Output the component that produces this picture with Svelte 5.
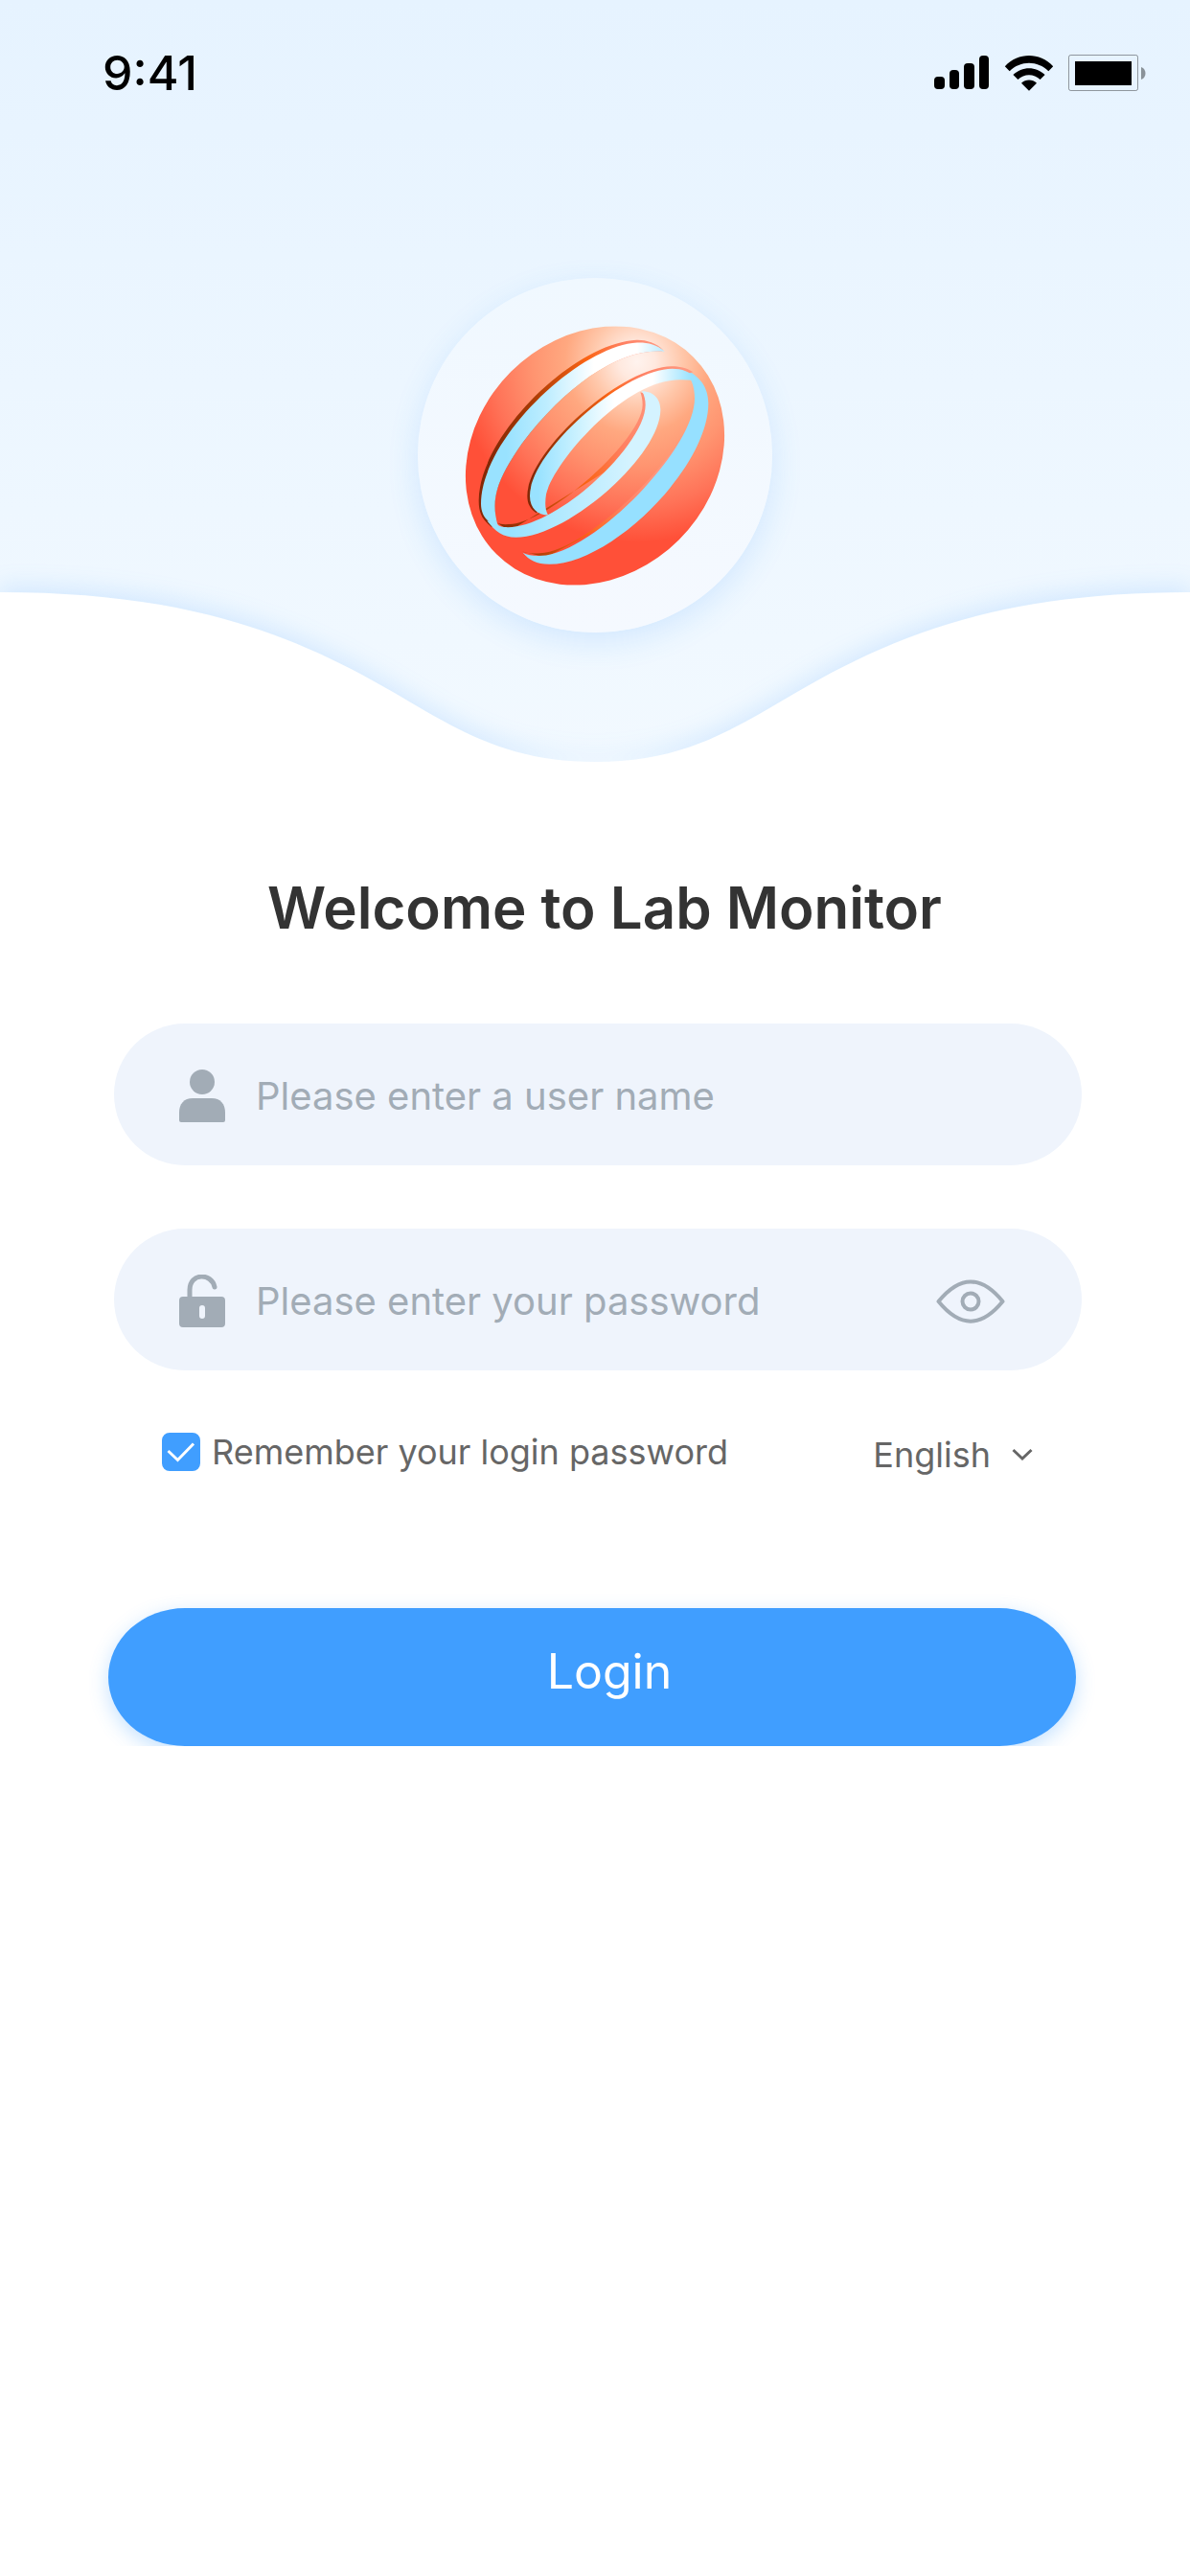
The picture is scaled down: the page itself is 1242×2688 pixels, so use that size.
<script lang="ts">
	let username = $state('')
	let password = $state('')
	let showPassword = $state(false)
	let remember = $state(true)
	let language = $state('en')

	const languages = [
		{ value: 'en', label: 'English' },
		{ value: 'de', label: 'Deutsch' },
		{ value: 'fr', label: 'Français' }
	]

	function login(event: SubmitEvent) {
		event.preventDefault()
	}
</script>

<div class="page">
	<header class="hero">
		<svg class="wave" viewBox="0 0 1242 240" preserveAspectRatio="none" aria-hidden="true">
			<path d="M0 58C200 58 310 104 410 162C480 203 530 235 621 235C712 235 762 203 832 162C932 104 1042 58 1242 58V240H0Z" />
		</svg>

		<div class="status">
			<span class="time">9:41</span>
			<div class="indicators">
				<svg width="58" height="36" viewBox="0 0 58 36" aria-hidden="true">
					<rect x="0" y="22" width="11" height="13" rx="4" />
					<rect x="16" y="15" width="10" height="20" rx="4" />
					<rect x="31" y="8" width="11" height="27" rx="4" />
					<rect x="47" y="0" width="10" height="35" rx="4" />
				</svg>
				<svg width="52" height="37" viewBox="0 0 52 37" aria-hidden="true">
					<path d="M.8 11.2C15-3.6 37-3.6 51.2 11.2L46.3 16.2C35 4.8 17 4.8 5.7 16.2Z" />
					<path d="M9.4 20.1C18.6 10.8 33.4 10.8 42.6 20.1L37.6 25.1C31 18.6 21 18.6 14.4 25.1Z" />
					<path d="M18 28.7C22.5 24.5 29.5 24.5 34 28.7L26 36.7Z" />
				</svg>
				<svg width="82" height="38" viewBox="0 0 82 38" aria-hidden="true">
					<rect x=".5" y=".5" width="72" height="37" rx="2" fill="none" stroke="#000" stroke-opacity=".38" />
					<rect x="7" y="7" width="59" height="25" />
					<path d="M76 13C82 15 82 24 76 26Z" fill-opacity=".4" />
				</svg>
			</div>
		</div>

		<div class="badge">
			<svg class="logo" viewBox="200 208 816 812" role="img" aria-label="Lab Monitor">
				<defs>
					<radialGradient id="ball" gradientUnits="userSpaceOnUse" cx="740" cy="320" r="565">
						<stop offset="0" stop-color="#fff3ee" />
						<stop offset=".1" stop-color="#ffe9df" />
						<stop offset=".25" stop-color="#ffc8ab" />
						<stop offset=".4" stop-color="#ffa880" />
						<stop offset=".58" stop-color="#ff9470" />
						<stop offset=".8" stop-color="#ff7358" />
						<stop offset="1" stop-color="#ff5038" />
					</radialGradient>
					<linearGradient id="front" gradientUnits="userSpaceOnUse" x1="330" y1="0" x2="830" y2="0">
						<stop offset="0" stop-color="#99e2ff" />
						<stop offset=".25" stop-color="#bdedff" />
						<stop offset=".55" stop-color="#fff" />
						<stop offset=".82" stop-color="#fff" />
						<stop offset="1" stop-color="#b5eaff" />
					</linearGradient>
					<linearGradient id="inner" gradientUnits="userSpaceOnUse" x1="430" y1="0" x2="910" y2="0">
						<stop offset="0" stop-color="#99e2ff" />
						<stop offset=".3" stop-color="#d3f4ff" />
						<stop offset=".5" stop-color="#fff" />
						<stop offset=".75" stop-color="#fff" />
						<stop offset="1" stop-color="#99e2ff" />
					</linearGradient>
					<linearGradient id="back" gradientUnits="userSpaceOnUse" x1="340" y1="0" x2="720" y2="0">
						<stop offset="0" stop-color="#99e2ff" />
						<stop offset="1" stop-color="#d4f3ff" />
					</linearGradient>
					<linearGradient id="edge" gradientUnits="userSpaceOnUse" x1="280" y1="0" x2="800" y2="0">
						<stop offset="0" stop-color="#842806" />
						<stop offset=".25" stop-color="#a83a04" />
						<stop offset=".58" stop-color="#fb6414" />
						<stop offset=".8" stop-color="#ff8062" />
						<stop offset="1" stop-color="#ff9880" />
					</linearGradient>
					<linearGradient id="edgeInner" gradientUnits="userSpaceOnUse" x1="410" y1="0" x2="890" y2="0">
						<stop offset="0" stop-color="#842806" />
						<stop offset=".2" stop-color="#a83a04" />
						<stop offset=".5" stop-color="#fb6414" />
						<stop offset=".7" stop-color="#ff8062" />
						<stop offset="1" stop-color="#ff9880" />
					</linearGradient>
					<clipPath id="round">
						<ellipse cx="608" cy="614" rx="436" ry="372" transform="rotate(-45 608 614)" />
					</clipPath>
				</defs>
				<rect x="200" y="208" width="816" height="812" fill="url(#ball)" clip-path="url(#round)" />
				<path fill="url(#edge)" d="M822 284C800 260 765 251 738 252C540 262 244 555 244 755C244 795 256 815 285 838L330 700Z" />
				<path fill="url(#ball)" d="M302 832C280 750 300 690 380 575C520 390 690 275 826 288L500 600Z" />
				<path fill="url(#edge)" d="M302 824C315 831 330 829 350 828C480 810 757 560 757 455C757 440 754 424 750 415L790 430L760 590L340 850Z" />
				<path fill="url(#back)" d="M270 818C295 850 320 870 360 870C520 870 813 615 813 470C813 440 795 412 755 412C763 425 766 440 766 455C766 580 490 838 335 838C320 838 308 836 302 828Z" />
				<path fill="url(#front)" d="M826 288C800 264 770 259 740 260C560 270 251 560 251 765C251 800 270 825 304 834C280 750 300 690 380 575C520 390 690 275 826 288Z" />
				<path fill="url(#edge)" d="M380 914C400 922 430 921 450 918C610 892 913 580 916 460L900 560L740 780L455 932Z" />
				<path fill="#96e0ff" d="M895 346C945 370 963 410 963 450C963 650 660 954 465 954C425 954 400 940 382 918C400 928 430 929 455 926C620 900 920 590 920 435C920 410 915 390 908 377Z" />
				<path fill="url(#edgeInner)" d="M915 352C895 338 870 334 848 334C690 336 396 600 396 740C396 765 405 780 425 794L480 640L700 420Z" />
				<path fill="url(#inner)" d="M930 376C905 350 880 342 850 342C700 342 404 600 404 740C404 780 430 800 461 800C450 780 452 755 455 735C475 640 700 370 880 376L915 378Z" />
			</svg>
		</div>
	</header>

	<main>
		<h1>Welcome to Lab Monitor</h1>

		<form onsubmit={login}>
			<div class="fields">
				<div class="field">
					<svg width="48" height="56" viewBox="0 0 48 56" aria-hidden="true">
						<circle cx="24" cy="13" r="13" />
						<path d="M14 30H34C43 30 48 36 48 45V53Q48 55 46 55H2Q0 55 0 53V45C0 36 5 30 14 30Z" />
					</svg>
					<input type="text" aria-label="User name" placeholder="Please enter a user name" bind:value={username} />
				</div>

				<div class="field">
					<svg width="48" height="56" viewBox="0 0 48 56" aria-hidden="true">
						<path d="M11 24V16C11 -2 34 -2 37 13" fill="none" stroke="#a2acb6" stroke-width="5" stroke-linecap="round" />
						<path fill-rule="evenodd" d="M4 23H44Q48 23 48 27V51Q48 55 44 55H4Q0 55 0 51V27Q0 23 4 23ZM21 35V43A3 3 0 0 0 27 43V35A3 3 0 0 0 21 35Z" />
					</svg>
					<input
						type={showPassword ? 'text' : 'password'}
						aria-label="Password"
						placeholder="Please enter your password"
						bind:value={password}
					/>
					<button class="eye" type="button" aria-label="Show password" onclick={() => (showPassword = !showPassword)}>
						<svg width="72" height="46" viewBox="0 0 72 46" aria-hidden="true">
							<path d="M2.5 23C25-4.5 47-4.5 69.5 23C47 50.5 25 50.5 2.5 23Z" />
							<circle cx="36" cy="23" r="8.5" />
						</svg>
					</button>
				</div>
			</div>

			<div class="options">
				<label class="remember">
					<input type="checkbox" bind:checked={remember} />
					<span>Remember your login password</span>
				</label>
				<div class="language">
					<select aria-label="Language" bind:value={language}>
						{#each languages as item}
							<option value={item.value}>{item.label}</option>
						{/each}
					</select>
					<svg width="22" height="14" viewBox="0 0 22 14" aria-hidden="true">
						<path d="M1.5 2L11 11L20.5 2" />
					</svg>
				</div>
			</div>

			<button class="login" type="submit">Login</button>
		</form>
	</main>
</div>

<style>
:global(body) {
	margin: 0;
	background: #fff;
}

.page {
	font-family: Inter, "Liberation Sans", sans-serif;
	color: #333;
}

input, select, button {
	font: inherit;
	color: inherit;
	border: 0;
	padding: 0;
	margin: 0;
	background: none;
	outline: none;
}

svg {
	display: block;
	flex: none;
}

.hero {
	position: relative;
	padding-bottom: 140px;
	background: linear-gradient(#e6f3ff, #f2f9ff);
	overflow: hidden;
}

.wave {
	position: absolute;
	left: 0;
	bottom: 0;
	width: 100%;
	height: 240px;
	fill: #fff;
	overflow: visible;
}

.wave path {
	filter: drop-shadow(0 -6px 12px rgba(64, 158, 255, .16));
}

.status {
	display: flex;
	justify-content: space-between;
	align-items: center;
	height: 150px;
	padding: 2px 45px 0 107px;
	box-sizing: border-box;
	color: #000;
}

.time {
	font-size: 50px;
	font-weight: 500;
}

.indicators {
	display: flex;
	align-items: center;
	gap: 15px;
}

.badge {
	position: relative;
	display: flex;
	align-items: center;
	justify-content: center;
	width: 370px;
	height: 370px;
	margin: 140px auto 0;
	border-radius: 50%;
	background: linear-gradient(#f0f8ff, #f5f9ff);
	box-shadow: 0 10px 32px rgba(64, 158, 255, .16);
}

.logo {
	width: 272px;
	height: 271px;
}

h1 {
	margin: 107px 0 81px;
	padding-left: 20px;
	font-size: 60px;
	line-height: 80px;
	font-weight: 600;
	text-align: center;
}

.fields {
	display: flex;
	flex-direction: column;
	gap: 66px;
	padding: 0 113px 0 119px;
}

.field {
	display: flex;
	align-items: center;
	gap: 32px;
	box-sizing: border-box;
	height: 148px;
	padding: 4px 80px 0 68px;
	border-radius: 74px;
	background: #eff4fc;
	fill: #a2acb6;
}

.field input {
	flex: 1;
	min-width: 0;
	font-size: 40px;
	line-height: 60px;
	color: #333;
}

.field input::placeholder {
	color: #a2acb6;
	opacity: 1;
}

.eye {
	cursor: pointer;
}

.eye svg {
	fill: none;
	stroke: #a2acb6;
	stroke-width: 4;
	stroke-linejoin: round;
}

.options {
	display: flex;
	justify-content: space-between;
	align-items: center;
	margin-top: 57px;
	padding: 0 164px 0 169px;
	font-size: 36px;
	line-height: 50px;
	color: #666;
}

.remember {
	display: flex;
	align-items: center;
	gap: 12px;
}

.remember input {
	appearance: none;
	width: 40px;
	height: 40px;
	border: 2px solid #409eff;
	border-radius: 8px;
}

.remember input:checked {
	background: #409eff url("data:image/svg+xml,%3Csvg xmlns='http://www.w3.org/2000/svg' viewBox='0 0 36 36'%3E%3Cpath d='M4.5 17L14.5 26.5L31 9.5' fill='none' stroke='%23fff' stroke-width='3'/%3E%3C/svg%3E") center / 36px 36px no-repeat;
}

.language {
	display: flex;
	align-items: center;
	gap: 22px;
	padding-top: 6px;
}

.language select {
	appearance: none;
	field-sizing: content;
}

.language svg {
	fill: none;
	stroke: #666;
	stroke-width: 3;
}

.login {
	display: block;
	width: calc(100% - 232px);
	height: 144px;
	margin: 135px 119px 0 113px;
	padding: 0 0 12px 36px;
	border-radius: 80px / 72px;
	background: #409eff;
	box-shadow: 0 6px 20px rgba(64, 158, 255, .3);
	font-size: 50px;
	color: #fff;
	cursor: pointer;
}
</style>
